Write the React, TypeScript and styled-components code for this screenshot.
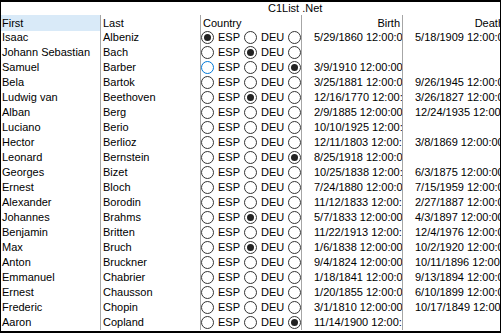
import styled, { createGlobalStyle } from 'styled-components';

type Country = 'ESP' | 'DEU' | 'OTHER' | null;

interface IComposer {
  first: string;
  last: string;
  country: Country;
  birth: string;
  death: string;
  focused?: boolean;
}

// dates are kept as the grid shows them (the column cuts the rest off)
const composers: IComposer[] = [
  { first: 'Isaac', last: 'Albeniz', country: 'ESP', birth: '5/29/1860 12:00:0', death: '5/18/1909 12:00:0' },
  { first: 'Johann Sebastian', last: 'Bach', country: 'DEU', birth: '', death: '' },
  { first: 'Samuel', last: 'Barber', country: 'OTHER', birth: '3/9/1910 12:00:00', death: '', focused: true },
  { first: 'Bela', last: 'Bartok', country: null, birth: '3/25/1881 12:00:0', death: '9/26/1945 12:00:0' },
  { first: 'Ludwig van', last: 'Beethoven', country: 'DEU', birth: '12/16/1770 12:00:', death: '3/26/1827 12:00:0' },
  { first: 'Alban', last: 'Berg', country: null, birth: '2/9/1885 12:00:00', death: '12/24/1935 12:00:' },
  { first: 'Luciano', last: 'Berio', country: null, birth: '10/10/1925 12:00:', death: '' },
  { first: 'Hector', last: 'Berlioz', country: null, birth: '12/11/1803 12:00:', death: '3/8/1869 12:00:00' },
  { first: 'Leonard', last: 'Bernstein', country: 'OTHER', birth: '8/25/1918 12:00:0', death: '' },
  { first: 'Georges', last: 'Bizet', country: null, birth: '10/25/1838 12:00:', death: '6/3/1875 12:00:00' },
  { first: 'Ernest', last: 'Bloch', country: null, birth: '7/24/1880 12:00:0', death: '7/15/1959 12:00:0' },
  { first: 'Alexander', last: 'Borodin', country: null, birth: '11/12/1833 12:00:', death: '2/27/1887 12:00:0' },
  { first: 'Johannes', last: 'Brahms', country: 'DEU', birth: '5/7/1833 12:00:00', death: '4/3/1897 12:00:00' },
  { first: 'Benjamin', last: 'Britten', country: null, birth: '11/22/1913 12:00:', death: '12/4/1976 12:00:0' },
  { first: 'Max', last: 'Bruch', country: 'DEU', birth: '1/6/1838 12:00:00', death: '10/2/1920 12:00:0' },
  { first: 'Anton', last: 'Bruckner', country: null, birth: '9/4/1824 12:00:00', death: '10/11/1896 12:00:' },
  { first: 'Emmanuel', last: 'Chabrier', country: null, birth: '1/18/1841 12:00:0', death: '9/13/1894 12:00:0' },
  { first: 'Ernest', last: 'Chausson', country: null, birth: '1/20/1855 12:00:0', death: '6/10/1899 12:00:0' },
  { first: 'Frederic', last: 'Chopin', country: null, birth: '3/1/1810 12:00:00', death: '10/17/1849 12:00:' },
  { first: 'Aaron', last: 'Copland', country: 'OTHER', birth: '11/14/1900 12:00:', death: '' },
];

function Radio({ checked, focused }: { checked?: boolean; focused?: boolean }) {
  return <RadioCircle $focused={focused}>{checked && <RadioDot />}</RadioCircle>;
}

export default function App() {
  return (
    <>
      <GlobalStyle />
      <Frame>
        <Title>C1List .Net</Title>
        <Grid>
          <HeadCell $active>First</HeadCell>
          <HeadCell $sep>Last</HeadCell>
          <HeadCell $sep>Country</HeadCell>
          <HeadCell $sep $right>Birth</HeadCell>
          <HeadCell $sep $right>Death</HeadCell>
          {composers.map((c, i) => (
            <Row key={i}>
              <Cell>{c.first}</Cell>
              <Cell $sep>{c.last}</Cell>
              <RadioCell>
                <Radio checked={c.country === 'ESP'} focused={c.focused} />
                <Label>ESP</Label>
                <Radio checked={c.country === 'DEU'} />
                <Label>DEU</Label>
                <Radio checked={c.country === 'OTHER'} />
              </RadioCell>
              <DateCell>{c.birth}</DateCell>
              <DateCell>{c.death}</DateCell>
            </Row>
          ))}
        </Grid>
      </Frame>
    </>
  );
}

const GlobalStyle = createGlobalStyle`
  body {
    margin: 0;
    background: #fff;
    font-family: "Liberation Sans", Arial, sans-serif;
  }
`;

const Frame = styled.div`
  box-sizing: border-box;
  width: 501px;
  height: 333px;
  border: 1px solid #000;
  border-top-width: 2px;
  border-bottom-width: 2px;
  overflow: hidden;
  background: #fff;
  color: #000;
  font-size: 11px;
`;

const Title = styled.div`
  height: 13px;
  line-height: 13px;
  padding-left: 267px;
  white-space: nowrap;
`;

const Grid = styled.div`
  display: grid;
  grid-template-columns: 99px 100px 101px 101px 104px;
  grid-auto-rows: 15px;
  width: 505px;
`;

const Row = styled.div`
  display: contents;
`;

const HeadCell = styled.div<{ $active?: boolean; $sep?: boolean; $right?: boolean }>`
  height: 16px;
  line-height: 17px;
  padding: 0 ${(p) => (p.$right ? '2px' : '0')} 0 ${(p) => (p.$sep ? '2px' : '1px')};
  text-align: ${(p) => (p.$right ? 'right' : 'left')};
  background: ${(p) => (p.$active ? '#d9eaf8' : 'transparent')};
  border-left: ${(p) => (p.$sep ? '1px solid #a6a6a6' : 'none')};
  white-space: nowrap;
  overflow: hidden;
`;

const Cell = styled.div<{ $sep?: boolean }>`
  line-height: 15px;
  padding-left: ${(p) => (p.$sep ? '2px' : '1px')};
  border-left: ${(p) => (p.$sep ? '1px solid #a6a6a6' : 'none')};
  white-space: nowrap;
  overflow: hidden;
`;

const RadioCell = styled.div`
  display: flex;
  align-items: center;
  border-left: 1px solid #a6a6a6;
  white-space: nowrap;
  overflow: hidden;
`;

const RadioCircle = styled.span<{ $focused?: boolean }>`
  box-sizing: border-box;
  flex: none;
  width: 13px;
  height: 13px;
  border-radius: 50%;
  border: 1px solid ${(p) => (p.$focused ? '#0078d7' : '#333')};
  display: flex;
  align-items: center;
  justify-content: center;
  background: #fff;
`;

const RadioDot = styled.span`
  width: 7px;
  height: 7px;
  border-radius: 50%;
  background: #222;
`;

const Label = styled.span`
  padding: 0 4px 0 4px;
  line-height: 15px;
`;

const DateCell = styled.div`
  line-height: 15px;
  padding: 0 2px 0 12px;
  border-left: 1px solid #a6a6a6;
  white-space: nowrap;
  overflow: hidden;
`;
